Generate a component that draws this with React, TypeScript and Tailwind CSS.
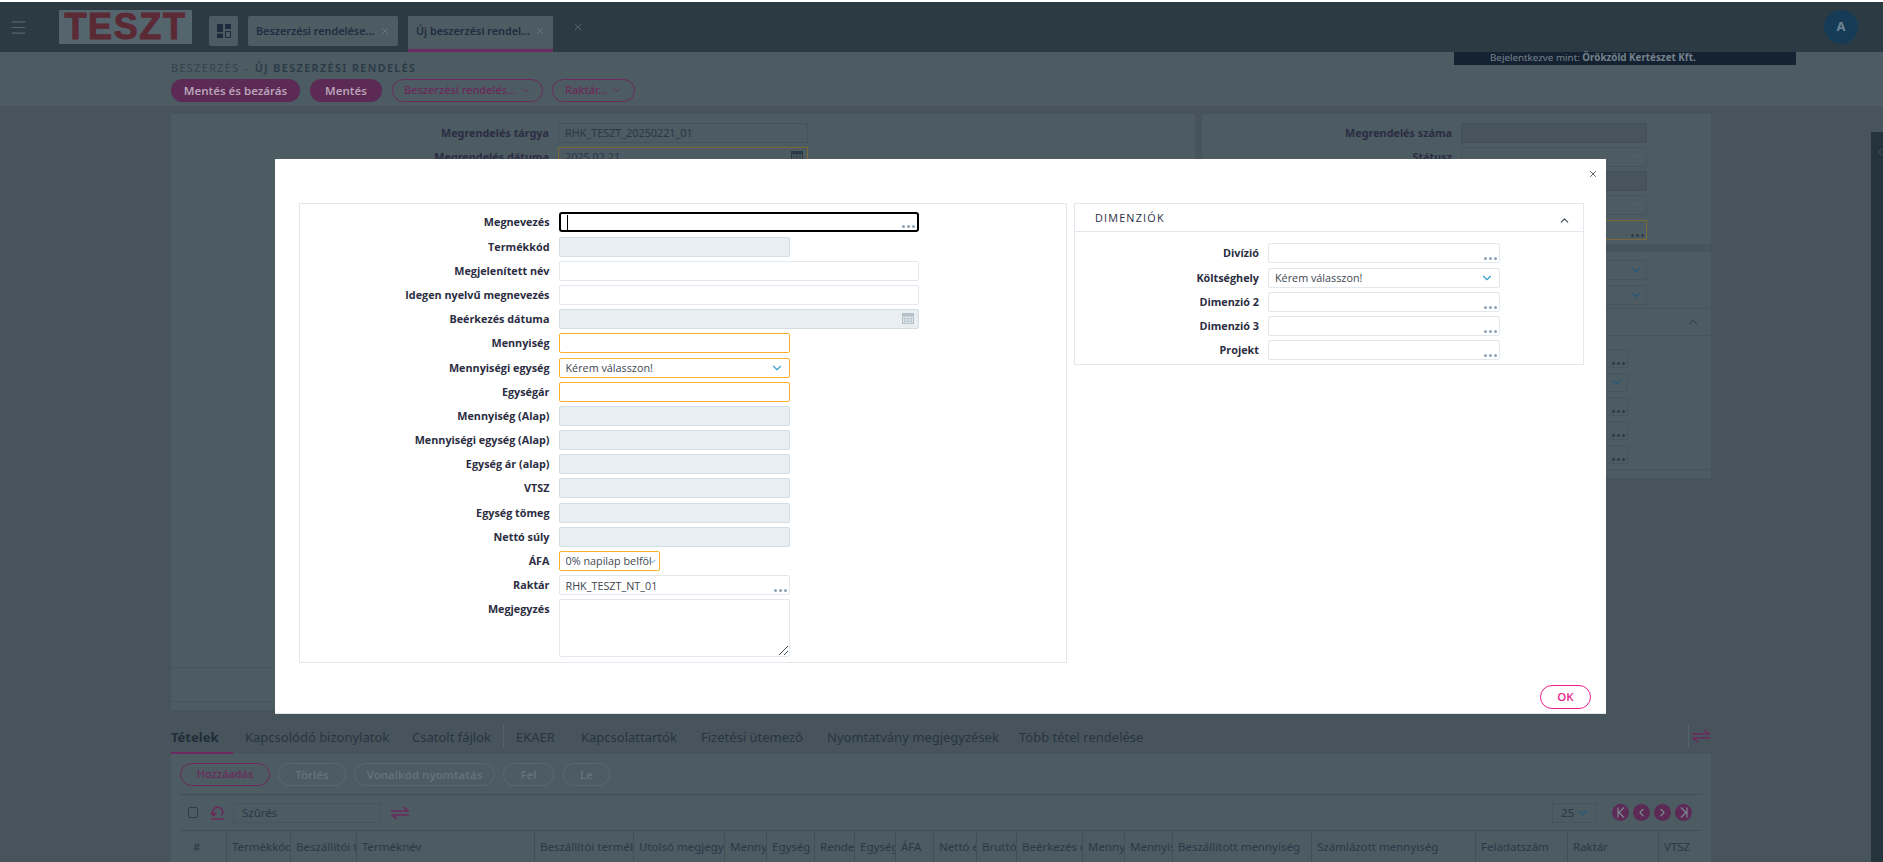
import { ChevronDown, ChevronLeft, ChevronRight, ChevronUp, Menu, X } from "lucide-react";
import type { ReactNode } from "react";

type FieldKind = "plain" | "disabled" | "required" | "focus";

const fieldStyles: Record<FieldKind, string> = {
  plain: "border border-[#e2e8ed] bg-white",
  disabled: "border border-[#d3dde4] bg-[#e9eef2]",
  required: "border border-[#fbb12d] bg-white",
  focus: "border-2 border-black bg-white rounded-[3px]",
};

const tableColumns = [
  { label: "#", width: 47 },
  { label: "Termékkód", width: 64 },
  { label: "Beszállítói termékkód", width: 66 },
  { label: "Terméknév", width: 178 },
  { label: "Beszállítói termék", width: 99 },
  { label: "Utolsó megjegyzés", width: 91 },
  { label: "Mennyiség", width: 42 },
  { label: "Egység", width: 48 },
  { label: "Rendelt", width: 40 },
  { label: "Egységár", width: 41 },
  { label: "ÁFA", width: 38 },
  { label: "Nettó érték", width: 43 },
  { label: "Bruttó", width: 40 },
  { label: "Beérkezés dátuma", width: 66 },
  { label: "Mennyiség", width: 42 },
  { label: "Mennyiség", width: 48 },
  { label: "Beszállított mennyiség", width: 139 },
  { label: "Számlázott mennyiség", width: 164 },
  { label: "Feladatszám", width: 92 },
  { label: "Raktár", width: 91 },
  { label: "VTSZ", width: 44 },
];

const pageTabs = [
  { label: "Tételek", className: "w-[74px] font-bold text-[#1f2d38]" },
  { label: "Kapcsolódó bizonylatok", className: "w-[167px]" },
  { label: "Csatolt fájlok", className: "w-[104px]" },
  { label: "EKAER", className: "w-[65px]" },
  { label: "Kapcsolattartók", className: "w-[120px]" },
  { label: "Fizetési ütemező", className: "w-[126px]" },
  { label: "Nyomtatvány megjegyzések", className: "w-[192px]" },
  { label: "Több tétel rendelése", className: "" },
];

function Dots({ className = "bg-[#8fa4ba]" }: { className?: string }) {
  return (
    <span className="absolute bottom-[2px] right-[2px] flex gap-[2px]">
      <span className={`h-[3px] w-[3px] rounded-full ${className}`} />
      <span className={`h-[3px] w-[3px] rounded-full ${className}`} />
      <span className={`h-[3px] w-[3px] rounded-full ${className}`} />
    </span>
  );
}

function CalendarGlyph({ color, cell }: { color: string; cell: string }) {
  return (
    <svg width="12" height="11" viewBox="0 0 12 11" className="absolute right-[4px] top-[3px]">
      <path d="M0 0h12v11H0z" fill={color} />
      <path d="M1 3.500h10V10H1z" fill={cell} />
      <path d="M2 5h2v1.500H2zM5 5h2v1.500H5zM8 5h2v1.500H8zM2 7.500h2V9H2zM5 7.500h2V9H5zM8 7.500h2V9H8z" fill={color} />
    </svg>
  );
}

function Field({
  kind = "plain",
  className = "w-[231px]",
  value,
  valueClass = "",
  children,
}: {
  kind?: FieldKind;
  className?: string;
  value?: string;
  valueClass?: string;
  children?: ReactNode;
}) {
  return (
    <div
      className={`relative flex h-5 shrink-0 items-center overflow-hidden rounded-[2px] pl-[6px] text-[10.8px] text-[#3d4650] ${fieldStyles[kind]} ${className}`}
    >
      {value ? <span className={`overflow-hidden whitespace-nowrap pt-[1px] ${valueClass}`}>{value}</span> : null}
      {children}
    </div>
  );
}

function Row({
  label,
  labelWidth = "w-[249.5px]",
  tall,
  children,
}: {
  label: string;
  labelWidth?: string;
  tall?: boolean;
  children: ReactNode;
}) {
  return (
    <div className={`flex gap-[9px] ${tall ? "items-start" : "items-center"}`}>
      <span
        className={`shrink-0 text-right text-[10.8px] font-bold leading-5 text-[#2b2d42] ${labelWidth}`}
      >
        {label}
      </span>
      {children}
    </div>
  );
}

function SelectChevron({ className = "right-[5px] top-[2px] text-[#3ba0d0]" }: { className?: string }) {
  return <ChevronDown size={14} strokeWidth={2} className={`absolute ${className}`} />;
}

function SwapIcon({ className = "" }: { className?: string }) {
  return (
    <svg width="18" height="14" viewBox="0 0 18 14" fill="none" stroke="currentColor" strokeWidth="1.6" className={className}>
      <path d="M0 5h17L12 .8" />
      <path d="M18 9H1l5 4.200" />
    </svg>
  );
}

function PageButton({
  children,
  variant,
  className,
}: {
  children: ReactNode;
  variant: "solid" | "outline" | "off";
  className: string;
}) {
  const look =
    variant === "solid"
      ? "bg-[#5c2a55] text-[#b9a2b7] text-[11.5px] font-semibold"
      : variant === "outline"
        ? "border border-[#6c2a5c] text-[#6c2a5c] text-[11px] font-medium"
        : "border border-[#5a6971] text-[#64727a] text-[11.5px] font-semibold";
  return (
    <div
      className={`flex h-[23px] shrink-0 items-center justify-center gap-1 rounded-[12px] ${look} ${className}`}
    >
      {children}
    </div>
  );
}

function PagerDot({ children }: { children: ReactNode }) {
  return (
    <div className="flex h-[17px] w-[17px] items-center justify-center rounded-full bg-[#5c2a55] text-[#7d8a92]">
      {children}
    </div>
  );
}

function BackgroundPage() {
  return (
    <>
      <header className="flex h-[50px] shrink-0 items-center bg-[#2c3b43]">
        <Menu size={19} strokeWidth={1.5} className="ml-[9px] text-[#56656d]" />
        <div className="ml-[31px] flex h-[34px] w-[133px] items-center justify-center bg-[#55656e] font-['Liberation_Sans',sans-serif] text-[36px] leading-none font-bold tracking-[1.6px] text-[#5b2a35] [-webkit-text-stroke:1px_#5b2a35]">
          TESZT
        </div>
        <div className="ml-[17px] mt-[14px] flex h-[30px] w-[29px] items-center justify-center self-start rounded-[2px] bg-[#4d5b62]">
          <svg width="14" height="14" viewBox="0 0 14 14">
            <path d="M0 0h6v8H0zM8 0h6v5H8zM0 9.500h6V14H0z" fill="#1c2b3d" />
            <path d="M8.500 7.500h5v6h-5z" fill="none" stroke="#1c2b3d" />
          </svg>
        </div>
        <div className="ml-[10px] mt-[14px] flex h-[30px] w-[150px] items-center justify-between self-start whitespace-nowrap rounded-[2px] bg-[#4d5b62] px-2 text-[10.8px] font-semibold text-[#1f2d40]">
          <span>Beszerzési rendelése...</span>
          <X size={10} className="shrink-0 text-[#6c7a82]" />
        </div>
        <div className="ml-[10px] mt-[14px] flex h-[36px] w-[145px] items-start justify-between self-start whitespace-nowrap border-b-[3px] border-[#6c2a63] bg-[#4d5b62] px-2 pt-[7px] text-[10.8px] font-semibold text-[#1f2d40]">
          <span>Új beszerzési rendel...</span>
          <X size={10} className="mt-[3px] shrink-0 text-[#6c7a82]" />
        </div>
        <X size={12} className="ml-[19px] text-[#56656d]" />
        <div className="ml-auto mr-[25px] flex h-[34px] w-[34px] items-center justify-center rounded-full bg-[#163b56] text-[13px] font-bold text-[#6d8494]">
          A
        </div>
      </header>

      <section className="relative h-[54px] shrink-0 bg-[#4d5b62] pl-[171px] pt-[9px]">
        <div className="text-[10.8px] leading-[13px] font-semibold tracking-[1.4px] text-[#2a3947]">
          <span className="font-normal text-[#33434f]">BESZERZÉS - </span>
          <span className="ml-[2px]">ÚJ BESZERZÉSI RENDELÉS</span>
        </div>
        <div className="mt-[5px] flex gap-[10px]">
          <PageButton variant="solid" className="w-[129px]">Mentés és bezárás</PageButton>
          <PageButton variant="solid" className="w-[72px]">Mentés</PageButton>
          <PageButton variant="outline" className="w-[151px]">
            Beszerzési rendelés... <ChevronDown size={11} />
          </PageButton>
          <PageButton variant="outline" className="ml-[-1px] w-[83px]">
            Raktár... <ChevronDown size={11} />
          </PageButton>
        </div>
        <div className="absolute left-[1454px] top-0 h-[13px] w-[342px] bg-[#152231] pl-[36px] text-[9.8px] leading-[11px] text-[#76838c]">
          Bejelentkezve mint: <span className="font-bold">Örökzöld Kertészet Kft.</span>
        </div>
      </section>

      <main className="flex min-h-0 flex-1 flex-col pl-[171px] pr-[172px]">
        <div className="mt-2 flex h-[596px] shrink-0 gap-[7px]">
          <div className="relative w-[1025px] bg-[#4d5b62] pt-[9px]">
            <div className="flex flex-col gap-1">
              <Row label="Megrendelés tárgya" labelWidth="w-[378px]">
                <div className="flex h-5 w-[250px] items-center border border-[#46535b] pl-[6px] text-[10.8px] text-[#2a3947]">
                  RHK_TESZT_20250221_01
                </div>
              </Row>
              <Row label="Megrendelés dátuma" labelWidth="w-[378px]">
                <div className="relative flex h-5 w-[250px] items-center border border-[#7b6a37] pl-[6px] text-[10.8px] text-[#2a3947]">
                  2025.02.21.
                  <CalendarGlyph color="#2c3a45" cell="#4d5b62" />
                </div>
              </Row>
            </div>
            <div className="absolute inset-x-0 bottom-[42px] border-t border-[#47545c]" />
            <div className="absolute inset-x-0 bottom-[8px] border-t border-[#47545c]" />
          </div>

          <div className="flex w-[509px] flex-col gap-2">
            <div className="flex h-[130px] flex-col items-end gap-1 bg-[#4d5b62] pr-[64px] pt-[9px]">
              <Row label="Megrendelés száma" labelWidth="w-[150px]">
                <div className="h-5 w-[186px] rounded-[2px] border border-[#434f57] bg-[#47545c]" />
              </Row>
              <Row label="Státusz" labelWidth="w-[150px]">
                <div className="relative h-5 w-[186px] rounded-[2px] border border-[#47545c]">
                  <SelectChevron className="right-[3px] top-[2px] text-[#53626b]" />
                </div>
              </Row>
              <div className="h-5 w-[186px] rounded-[2px] border border-[#434f57] bg-[#47545c]" />
              <div className="relative h-5 w-[186px] rounded-[2px] border border-[#47545c]">
                <SelectChevron className="right-[3px] top-[2px] text-[#53626b]" />
              </div>
              <div className="relative mt-[1px] h-5 w-[186px] border border-[#7b6a37]">
                <Dots className="bg-[#2d3b45]" />
              </div>
            </div>
            <div className="relative flex h-[226px] flex-col items-end bg-[#4d5b62] pr-[64px] pt-2">
              <div className="relative h-5 w-[186px] rounded-[2px] border border-[#47545c]">
                <SelectChevron className="right-[3px] top-[2px] text-[#265a78]" />
              </div>
              <div className="relative mt-[5px] h-5 w-[186px] rounded-[2px] border border-[#47545c]">
                <SelectChevron className="right-[3px] top-[2px] text-[#265a78]" />
              </div>
              <div className="absolute inset-x-0 top-[56px] flex h-[28px] items-center justify-end border-y border-[#47545c] pr-[11px]">
                <ChevronUp size={14} strokeWidth={1.5} className="text-[#1f2d38]" />
              </div>
              <div className="mt-[44px] flex w-[186px] flex-col gap-[5px] pr-[19px]">
                {[0, 1, 2, 3, 4].map((item) => (
                  <div key={item} className="relative h-[19px] rounded-[2px] border border-[#47545c]">
                    {item === 1 ? (
                      <SelectChevron className="right-[3px] top-[1px] text-[#265a78]" />
                    ) : (
                      <Dots className="bg-[#2d3b45]" />
                    )}
                  </div>
                ))}
              </div>
              <div className="absolute inset-x-0 bottom-[8px] border-t border-[#47545c]" />
            </div>
          </div>
        </div>

        <nav className="relative mt-[8px] flex h-[36px] w-[1540px] shrink-0 items-center pt-[4px] text-[13px] text-[#273542]">
          {pageTabs.map((tab) => (
            <span key={tab.label} className={`whitespace-nowrap ${tab.className}`}>
              {tab.label}
            </span>
          ))}
          <span className="absolute bottom-0 left-0 h-[2px] w-[62px] bg-[#6c2a63]" />
          <span className="absolute left-[332px] top-[6px] h-[24px] border-l border-[#53626b]" />
          <span className="absolute right-[22px] top-[6px] h-[24px] border-l border-[#53626b]" />
          <SwapIcon className="absolute right-[1px] top-[11px] text-[#6c2a5c]" />
        </nav>

        <section className="w-[1540px] flex-1 bg-[#4d5b62] px-[9px] pt-[9px]">
          <div className="flex h-[32px] items-start gap-2 border-b border-[#424f57]">
            <PageButton variant="outline" className="w-[90px]">Hozzáadás</PageButton>
            <PageButton variant="off" className="w-[68px]">Törlés</PageButton>
            <PageButton variant="off" className="w-[141px]">Vonalkód nyomtatás</PageButton>
            <PageButton variant="off" className="w-[51px]">Fel</PageButton>
            <PageButton variant="off" className="ml-[1px] w-[47px]">Le</PageButton>
          </div>
          <div className="flex h-[36px] items-center border-b border-[#424f57] pl-[8px]">
            <span className="h-[11px] w-[10px] rounded-[2px] border border-[#2f3d47]" />
            <svg width="15" height="15" viewBox="0 0 15 15" fill="none" stroke="#6c2a5c" strokeWidth="1.7" className="ml-[12px]">
              <path d="M1 14h13M3.500 10a5 5 0 1 1 8 .5M.8 7.500l2.700 3 3-2.500" />
            </svg>
            <div className="ml-[8px] flex h-5 w-[148px] items-center border border-[#47545c] pl-2 text-[11.5px] text-[#2a3947]">
              Szűrés
            </div>
            <SwapIcon className="ml-[10px] text-[#6c2a5c]" />
            <div className="ml-auto mr-[10px] flex items-center">
              <div className="relative flex h-5 w-[45px] items-center border border-[#47545c] pl-2 text-[11.5px] text-[#2a3947]">
                25
                <SelectChevron className="right-[6px] top-[2px] text-[#265a78]" />
              </div>
              <div className="ml-[15px] flex gap-1">
                <PagerDot>
                  <svg width="10" height="11" viewBox="0 0 10 11" fill="none" stroke="currentColor" strokeWidth="1.2">
                    <path d="M2 .5v10M8 .5L3 5.500l5 5" />
                  </svg>
                </PagerDot>
                <PagerDot>
                  <ChevronLeft size={13} />
                </PagerDot>
                <PagerDot>
                  <ChevronRight size={13} />
                </PagerDot>
                <PagerDot>
                  <svg width="10" height="11" viewBox="0 0 10 11" fill="none" stroke="currentColor" strokeWidth="1.2">
                    <path d="M8 .5v10M2 .5l5 5-5 5" />
                  </svg>
                </PagerDot>
              </div>
            </div>
          </div>
          <div className="flex h-[31px]">
            {tableColumns.map((col, index) => (
              <div
                key={`${col.label}-${index}`}
                style={{ width: col.width }}
                className={`flex shrink-0 items-center overflow-hidden whitespace-nowrap border-r border-[#424f57] text-[11.5px] text-[#2a3947] ${index === 0 ? "pl-[13px]" : "pl-[5px]"} ${index === tableColumns.length - 1 ? "border-r-0" : ""}`}
              >
                {col.label}
              </div>
            ))}
          </div>
        </section>
      </main>
    </>
  );
}

function Modal() {
  const wide = "w-[360px]";
  return (
    <div className="absolute left-[275px] top-[159px] flex h-[555px] w-[1331px] flex-col border-b border-[#dfe6ea] bg-white font-['Open_Sans',sans-serif]">
      <div className="flex h-[44.4px] shrink-0 justify-end pr-[8px] pt-[10px]">
        <X size={10} strokeWidth={2} className="text-[#3d4650]" />
      </div>
      <div className="flex items-start gap-[7px] pl-[24px]">
        <div className="h-[460px] w-[768px] border border-[#e2e8ed] pt-2">
          <div className="flex flex-col gap-[4.19px]">
            <Row label="Megnevezés">
              <Field kind="focus" className={wide}>
                <span className="h-[15px] w-px bg-black" />
                <Dots />
              </Field>
            </Row>
            <Row label="Termékkód"><Field kind="disabled" /></Row>
            <Row label="Megjelenített név"><Field className={wide} /></Row>
            <Row label="Idegen nyelvű megnevezés"><Field className={wide} /></Row>
            <Row label="Beérkezés dátuma">
              <Field kind="disabled" className={wide}>
                <CalendarGlyph color="#b5c1c9" cell="#dbe2e7" />
              </Field>
            </Row>
            <Row label="Mennyiség"><Field kind="required" /></Row>
            <Row label="Mennyiségi egység">
              <Field kind="required" value="Kérem válasszon!">
                <SelectChevron />
              </Field>
            </Row>
            <Row label="Egységár"><Field kind="required" /></Row>
            <Row label="Mennyiség (Alap)"><Field kind="disabled" /></Row>
            <Row label="Mennyiségi egység (Alap)"><Field kind="disabled" /></Row>
            <Row label="Egység ár (alap)"><Field kind="disabled" /></Row>
            <Row label="VTSZ"><Field kind="disabled" /></Row>
            <Row label="Egység tömeg"><Field kind="disabled" /></Row>
            <Row label="Nettó súly"><Field kind="disabled" /></Row>
            <Row label="ÁFA">
              <Field kind="required" className="w-[101px]" value="0% napilap belföldi" valueClass="w-[85px]">
                <ChevronDown size={11} strokeWidth={2} className="absolute right-[1px] top-[4px] text-[#3ba0d0]" />
              </Field>
            </Row>
            <Row label="Raktár">
              <Field value="RHK_TESZT_NT_01">
                <Dots />
              </Field>
            </Row>
            <Row label="Megjegyzés" tall>
              <div className="relative h-[58px] w-[231px] rounded-[2px] border border-[#e2e8ed]">
                <svg width="11" height="11" viewBox="0 0 11 11" stroke="#3d4650" className="absolute bottom-0 right-0">
                  <path d="M1 10L10 1M6 10l4-4" />
                </svg>
              </div>
            </Row>
          </div>
        </div>

        <div className="h-[162px] w-[510px] border border-[#e2e8ed]">
          <div className="flex h-[28px] items-center justify-between border-b border-[#e2e8ed] pl-[20px] pr-[12px]">
            <span className="text-[10.8px] tracking-[1.2px] text-[#2b2d42]">DIMENZIÓK</span>
            <ChevronUp size={13} strokeWidth={2} className="mt-[5px] text-[#3d4650]" />
          </div>
          <div className="mt-[11px] flex flex-col gap-[4.19px]">
            <Row label="Divízió" labelWidth="w-[184px]"><Field className="w-[232px]"><Dots /></Field></Row>
            <Row label="Költséghely" labelWidth="w-[184px]">
              <Field className="w-[232px]" value="Kérem válasszon!"><SelectChevron /></Field>
            </Row>
            <Row label="Dimenzió 2" labelWidth="w-[184px]"><Field className="w-[232px]"><Dots /></Field></Row>
            <Row label="Dimenzió 3" labelWidth="w-[184px]"><Field className="w-[232px]"><Dots /></Field></Row>
            <Row label="Projekt" labelWidth="w-[184px]"><Field className="w-[232px]"><Dots /></Field></Row>
          </div>
        </div>
      </div>
      <div className="mt-auto flex justify-end pb-[4px] pr-[15px]">
        <div className="flex h-[24px] w-[51px] items-center justify-center rounded-[12px] border border-[#ec1f8e] text-[11.5px] font-semibold text-[#ec1f8e]">
          OK
        </div>
      </div>
    </div>
  );
}

export default function App() {
  return (
    <div className="relative flex h-screen w-full flex-col overflow-hidden bg-[#47545c] pt-[2px] font-['Noto_Sans',sans-serif]">
      <div className="absolute inset-x-0 top-0 h-[2px] bg-white" />
      <BackgroundPage />
      <div className="absolute bottom-0 right-0 top-[132px] w-[12px] bg-[#25343c]">
        <ChevronLeft size={12} className="ml-[3px] mt-[14px] text-[#47545c]" />
      </div>
      <Modal />
    </div>
  );
}
